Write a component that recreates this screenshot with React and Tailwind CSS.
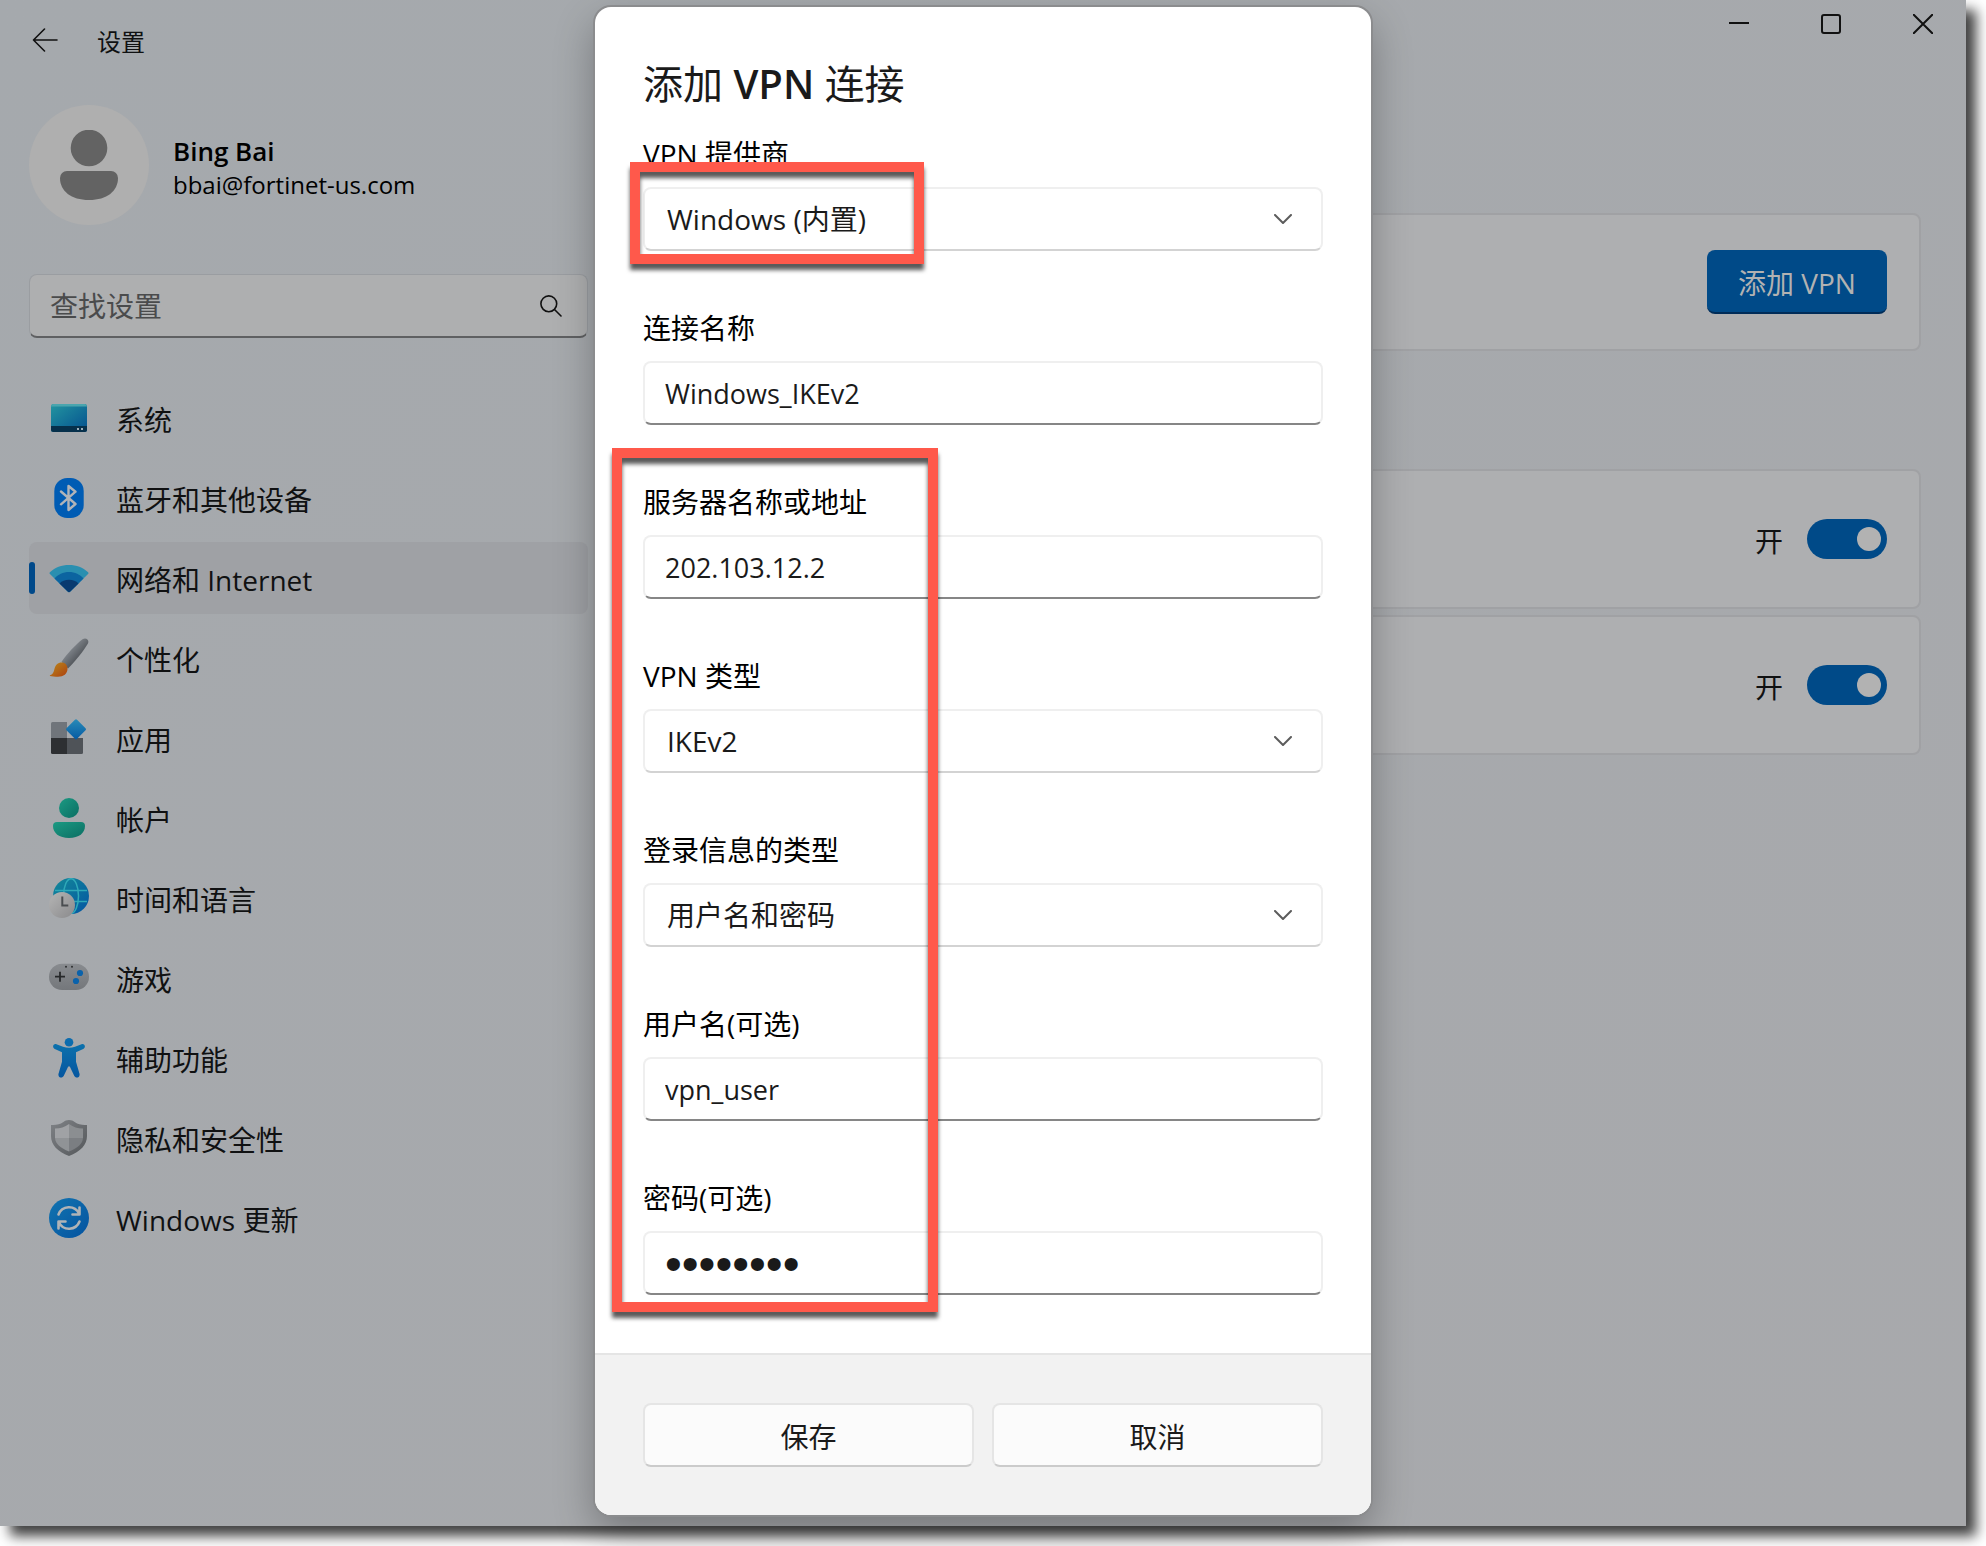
import { useState } from 'react'

function SystemIcon() {
  return (
    <svg viewBox="0 0 40 40" className="size-10" aria-hidden="true">
      <defs>
        <linearGradient id="sys" x1="0" y1="0" x2="1" y2="1">
          <stop offset="0" stopColor="#2395a0" />
          <stop offset="1" stopColor="#04508f" />
        </linearGradient>
      </defs>
      <rect x="2" y="6" width="36" height="28" rx="2.5" fill="url(#sys)" />
      <path d="M2 8.5A2.5 2.5 0 0 1 4.500 6h31A2.500 2.500 0 0 1 38 8.500z" fill="#4aa5ae" />
      <path d="M2 28h36v3.500a2.500 2.500 0 0 1-2.500 2.500h-31A2.500 2.500 0 0 1 2 31.500z" fill="#06304b" />
      <path d="M28 30h2v2h-2zM32 30h2v2h-2z" fill="#9fb0bb" />
    </svg>
  )
}

function BluetoothIcon() {
  return (
    <svg viewBox="0 0 40 40" className="size-10" aria-hidden="true">
      <rect x="5.300" y="0" width="29.400" height="40" rx="13" fill="#005cb4" />
      <path d="M12 13.500 26.500 26 19.500 32V8l7 5.700L12 26.300" fill="none" stroke="#b1b4b8" strokeWidth="2.400" strokeLinecap="round" strokeLinejoin="round" />
    </svg>
  )
}

function NetworkIcon() {
  return (
    <svg viewBox="0 0 40 40" className="size-10" aria-hidden="true">
      <path d="M1.200 16.300a1.500 1.500 0 0 1 0-2.300C6 9.500 12.500 7 20 7s14 2.500 18.800 7a1.500 1.500 0 0 1 0 2.300L21 33.800a1.500 1.500 0 0 1-2 0z" fill="#2a8fb0" />
      <path d="M5.500 20.500C9 16.500 14 14 20 14s11 2.500 14.500 6.500L21 33.800a1.500 1.500 0 0 1-2 0z" fill="#0c64a0" />
      <path d="M10.500 25.500C13 23 16 21.800 20 21.800s7 1.200 9.500 3.700L21 33.800a1.500 1.500 0 0 1-2 0z" fill="#083a70" />
    </svg>
  )
}

function BrushIcon() {
  return (
    <svg viewBox="0 0 40 40" className="size-10" aria-hidden="true">
      <defs>
        <linearGradient id="handle" x1="0.300" y1="0.300" x2="0.700" y2="0.700">
          <stop offset="0" stopColor="#858a90" />
          <stop offset="1" stopColor="#4b4f54" />
        </linearGradient>
        <linearGradient id="tip" x1="0" y1="0" x2="1" y2="1">
          <stop offset="0" stopColor="#b98a1c" />
          <stop offset="1" stopColor="#ad400f" />
        </linearGradient>
      </defs>
      <path d="M12.500 23.800C18 16 27 6 33.500 1.300c3.500-2.300 7.300.7 5.300 4.400C34.500 13 26 23.500 19 30.500z" fill="url(#handle)" />
      <path d="M.8 37.300c3-.8 3.600-2.500 4.500-5.800C6.200 27 9 24.500 12.500 24.500c3.800 0 6 2.500 6 6.300 0 5-4 8-9.500 8-3 0-6-.3-8-.8z" fill="url(#tip)" />
    </svg>
  )
}

function AppsIcon() {
  return (
    <svg viewBox="0 0 40 40" className="size-10" aria-hidden="true">
      <defs>
        <linearGradient id="apps" x1="0" y1="0" x2="1" y2="1">
          <stop offset="0" stopColor="#2a8cb8" />
          <stop offset="1" stopColor="#0459a3" />
        </linearGradient>
      </defs>
      <path d="M3.500 4H18v16H2V5.500A1.500 1.500 0 0 1 3.500 4z" fill="#70757b" />
      <path d="M2 20h16v16H3.500A1.500 1.500 0 0 1 2 34.500z" fill="#2d2f32" />
      <path d="M18 20h16v14.500a1.500 1.500 0 0 1-1.500 1.500H18z" fill="#4f5358" />
      <rect x="19.500" y="3.800" width="15" height="15" rx="1.500" transform="rotate(45 27 11.300)" fill="url(#apps)" />
    </svg>
  )
}

function AccountIcon() {
  return (
    <svg viewBox="0 0 40 40" className="size-10" aria-hidden="true">
      <defs>
        <linearGradient id="acct" x1="0" y1="0" x2="1" y2="1">
          <stop offset="0" stopColor="#1c9a83" />
          <stop offset="1" stopColor="#0b6e63" />
        </linearGradient>
      </defs>
      <circle cx="20" cy="10" r="10" fill="url(#acct)" />
      <path d="M8 24h24a4 4 0 0 1 4 4c0 7-6 12-16 12S4 35 4 28a4 4 0 0 1 4-4z" fill="url(#acct)" />
    </svg>
  )
}

function TimeIcon() {
  return (
    <svg viewBox="0 0 40 40" className="size-10" aria-hidden="true">
      <defs>
        <linearGradient id="globe" x1="0" y1="0" x2="1" y2="1">
          <stop offset="0" stopColor="#148a98" />
          <stop offset="1" stopColor="#0355a3" />
        </linearGradient>
        <linearGradient id="clock" x1="0" y1="0" x2="1" y2="1">
          <stop offset="0" stopColor="#b5b5b5" />
          <stop offset="1" stopColor="#8a8a8c" />
        </linearGradient>
      </defs>
      <circle cx="22" cy="18" r="18" fill="url(#globe)" />
      <g fill="none" stroke="#2fa9b8" strokeWidth="1.500">
        <ellipse cx="22" cy="18" rx="7.500" ry="17.300" />
        <path d="M6 12.500h32M6 23.500h32" />
      </g>
      <circle cx="13" cy="27" r="13" fill="url(#clock)" />
      <path d="M13.300 18.500v9h6" fill="none" stroke="#4a4d50" strokeWidth="2" />
    </svg>
  )
}

function GameIcon() {
  return (
    <svg viewBox="0 0 40 40" className="size-10" aria-hidden="true">
      <defs>
        <linearGradient id="pad" x1="0" y1="0" x2="0" y2="1">
          <stop offset="0" stopColor="#888b8f" />
          <stop offset="1" stopColor="#74777b" />
        </linearGradient>
      </defs>
      <rect x="0" y="5.700" width="40" height="26.300" rx="13" fill="url(#pad)" />
      <path d="M11 13.700v10M6 18.700h10" stroke="#26282a" strokeWidth="1.800" />
      <circle cx="31" cy="15" r="3.100" fill="#0a62ab" />
      <circle cx="27" cy="23" r="3.100" fill="#0a62ab" />
      <circle cx="17" cy="8.800" r="1" fill="#2d2f31" />
      <circle cx="23" cy="8.800" r="1" fill="#2d2f31" />
    </svg>
  )
}

function AccessIcon() {
  return (
    <svg viewBox="0 0 40 40" className="size-10" aria-hidden="true">
      <defs>
        <linearGradient id="access" x1="0" y1="0" x2="0" y2="1">
          <stop offset="0" stopColor="#0c71ac" />
          <stop offset="1" stopColor="#0556a0" />
        </linearGradient>
      </defs>
      <circle cx="20" cy="4.300" r="4.300" fill="#0c6cae" />
      <path d="M7.500 6.200 14 8.800c4 1.400 8 1.400 12 0l6.500-2.600c3.300-1 4.800 3.200 1.700 4.700L27 14.200v9.600l3.500 12c.8 3.600-3.700 5.300-5.300 2L20.800 28.500h-1.600L14.800 37.800c-1.600 3.300-6.100 1.600-5.300-2l3.500-12v-9.600L5.800 10.900c-3.100-1.500-1.600-5.700 1.700-4.700z" fill="url(#access)" />
    </svg>
  )
}

function ShieldIcon() {
  return (
    <svg viewBox="0 0 40 40" className="size-10" aria-hidden="true">
      <defs>
        <linearGradient id="shield" x1="0" y1="0" x2="1" y2="1">
          <stop offset="0" stopColor="#7f8286" />
          <stop offset="1" stopColor="#54575a" />
        </linearGradient>
      </defs>
      <path d="M20 2c2.500 0 4 .8 6 2.300C28.500 6 32 7 36 7h2v11c0 9-6.500 15.500-18 20C8.500 33.500 2 27 2 18V7h2c4 0 7.500-1 10-2.700C16 2.800 17.500 2 20 2z" fill="url(#shield)" />
      <path d="M20 6v14H6v-9.500c5.500 0 9.500-1.500 14-4.500z" fill="#a0a2a5" />
      <path d="M20 6c4.500 3 8.500 4.500 14 4.500V20H20z" fill="#8b8e91" />
      <path d="M6 20h14v13.500C11.500 30 6.500 26 6 20z" fill="#909396" />
      <path d="M34 20H20v13.500c8.500-3.500 13.500-7.500 14-13.500z" fill="#7b7e82" />
    </svg>
  )
}

function UpdateIcon() {
  return (
    <svg viewBox="0 0 40 40" className="size-10" aria-hidden="true">
      <defs>
        <linearGradient id="update" x1="0" y1="0" x2="1" y2="1">
          <stop offset="0" stopColor="#1274b0" />
          <stop offset="1" stopColor="#0453a0" />
        </linearGradient>
      </defs>
      <circle cx="20" cy="20" r="20" fill="url(#update)" />
      <g fill="none" stroke="#b0b3b6" strokeWidth="2.600" strokeLinecap="round" strokeLinejoin="round">
        <path d="M9.500 16.500A11.200 11.200 0 0 1 30 15.500M30.500 9.500v7h-7" />
        <path d="M30.500 23.500A11.200 11.200 0 0 1 10 24.500M9.500 30.500v-7h7" />
      </g>
    </svg>
  )
}

const NAV = [
  { label: '系统', icon: SystemIcon },
  { label: '蓝牙和其他设备', icon: BluetoothIcon },
  { label: '网络和 Internet', icon: NetworkIcon, active: true },
  { label: '个性化', icon: BrushIcon },
  { label: '应用', icon: AppsIcon },
  { label: '帐户', icon: AccountIcon },
  { label: '时间和语言', icon: TimeIcon },
  { label: '游戏', icon: GameIcon },
  { label: '辅助功能', icon: AccessIcon },
  { label: '隐私和安全性', icon: ShieldIcon },
  { label: 'Windows 更新', icon: UpdateIcon },
]

function TitleBar() {
  return (
    <header className="flex h-20 items-start justify-between">
      <div className="flex h-20 items-center gap-[39px] pl-8">
        <button type="button" aria-label="返回">
          <svg viewBox="0 0 26 24" className="h-6 w-[26px]" fill="none" stroke="#111" strokeWidth="1.600" strokeLinecap="round" strokeLinejoin="round">
            <path d="M25 12H1.500M12.500 1 1.500 12l11 11" />
          </svg>
        </button>
        <span className="pt-[3px] text-2xl">设置</span>
      </div>
      <div className="flex h-12 gap-[6px]">
        <button type="button" aria-label="最小化" className="flex w-[86px] items-center justify-center">
          <svg viewBox="0 0 20 20" className="size-5" stroke="#111" strokeWidth="2"><path d="M0 9h20" /></svg>
        </button>
        <button type="button" aria-label="最大化" className="flex w-[86px] items-center justify-center">
          <svg viewBox="0 0 20 20" className="size-5" fill="none" stroke="#111" strokeWidth="2"><rect x="1" y="1" width="18" height="18" rx="2" /></svg>
        </button>
        <button type="button" aria-label="关闭" className="flex w-[86px] items-center justify-center">
          <svg viewBox="0 0 20 20" className="size-5" stroke="#111" strokeWidth="2"><path d="m0 0 20 20M20 0 0 20" /></svg>
        </button>
      </div>
    </header>
  )
}

function Sidebar() {
  return (
    <aside className="w-[559px] shrink-0">
      <div className="flex items-center gap-6">
        <div className="flex size-[120px] items-center justify-center rounded-full bg-[#afafaf]">
          <svg viewBox="0 0 58 70" className="h-[70px] w-[58px]" fill="#636363" aria-hidden="true">
            <circle cx="29" cy="18" r="18.300" />
            <path d="M7 41h44a7 7 0 0 1 7 7c0 13-11 22-29 22S0 61 0 48a7 7 0 0 1 7-7z" />
          </svg>
        </div>
        <div className="pt-[3px] text-black">
          <p className="text-[26px] leading-9 font-semibold">Bing Bai</p>
          <p className="text-2xl">bbai@fortinet-us.com</p>
        </div>
      </div>

      <label className="mt-[49px] flex h-16 items-center rounded-lg border border-b-2 border-[#9a9da1] border-b-[#5f6062] bg-[#aeafb0] pr-[25px] pl-5">
        <input type="search" aria-label="查找设置" placeholder="查找设置" className="min-w-0 flex-1 bg-transparent text-[28px] outline-none placeholder:text-[#4a4b4c]" />
        <svg viewBox="0 0 22 22" className="size-[22px]" fill="none" stroke="#111" strokeWidth="1.600" strokeLinecap="round" aria-hidden="true">
          <circle cx="8.800" cy="8.800" r="7.900" />
          <path d="m14.500 14.500 6.500 6.500" />
        </svg>
      </label>

      <nav className="mt-11 flex flex-col gap-2">
        {NAV.map(({ label, icon: Icon, active }) => (
          <a
            key={label}
            href="#"
            aria-current={active ? 'page' : undefined}
            className={active
              ? 'flex h-[72px] items-center rounded-lg bg-[#9fa1a5] text-[28px]'
              : 'flex h-[72px] items-center rounded-lg text-[28px]'}
          >
            <span className={active ? 'h-8 w-[6px] rounded-full bg-[#00498a]' : 'h-8 w-[6px]'} />
            <span className="mr-[27px] ml-[14px]"><Icon /></span>
            <span className="pt-[3px]">{label}</span>
          </a>
        ))}
      </nav>
    </aside>
  )
}

function ToggleCard({ label }) {
  const [on, setOn] = useState(true)
  return (
    <label className="flex h-[140px] items-center justify-end gap-6 rounded-lg border-2 border-[#a0a1a4] bg-[#aeafb1] px-8">
      <span className="pt-[3px] text-[28px]">{on ? '开' : '关'}</span>
      <input
        type="checkbox"
        role="switch"
        aria-label={label}
        checked={on}
        onChange={e => setOn(e.target.checked)}
        className="peer sr-only"
      />
      <span className="flex h-10 w-20 items-center rounded-full bg-[#838487] px-[6px] peer-checked:justify-end peer-checked:bg-[#004a88]">
        <span className="size-6 rounded-full bg-[#b2b2b2]" />
      </span>
    </label>
  )
}

function Field({ id, label, children }) {
  return (
    <div className="relative">
      <label htmlFor={id} className="mb-[17px] block text-[28px] leading-8 text-black">{label}</label>
      {children}
    </div>
  )
}

function TextField({ id, label, value, type = 'text' }) {
  return (
    <Field id={id} label={label}>
      <input
        id={id}
        type={type}
        defaultValue={value}
        className={type === 'password'
          ? 'block h-16 w-full rounded-lg border-2 border-[#efefef] border-b-[#868686] bg-white px-5 font-["Liberation_Sans",sans-serif] text-5xl outline-none'
          : 'block h-16 w-full rounded-lg border-2 border-[#efefef] border-b-[#868686] bg-white px-5 text-[27px] outline-none'}
      />
    </Field>
  )
}

function SelectField({ id, label, value, children }) {
  return (
    <Field id={id} label={label}>
      <div className="grid items-center">
        <select
          id={id}
          defaultValue={value}
          className="col-start-1 row-start-1 h-16 w-full appearance-none rounded-lg border-2 border-[#efefef] border-b-[#d3d3d3] bg-white px-[22px] text-[28px] outline-none"
        >
          <option>{value}</option>
        </select>
        <svg viewBox="0 0 18 10" className="pointer-events-none col-start-1 row-start-1 mr-[31px] h-[10px] w-[18px] justify-self-end" fill="none" stroke="#5c5c5c" strokeWidth="2" strokeLinecap="round" strokeLinejoin="round" aria-hidden="true">
          <path d="m1 1 8 8 8-8" />
        </svg>
      </div>
      {children}
    </Field>
  )
}

function VpnDialog() {
  return (
    <section
      role="dialog"
      aria-labelledby="dialog-title"
      className="mt-[7px] mb-[11px] w-[776px] self-start justify-self-center overflow-hidden rounded-2xl bg-white text-[#1a1a1a] shadow-[0_0_0_2px_#8b8c8e,0_16px_40px_rgba(0,0,0,0.3)] [grid-area:1/1]"
    >
      <form>
        <div className="px-12 pt-[53px] pb-[58px]">
          <h1 id="dialog-title" className="mb-[30px] text-[40px] leading-[48px]">
            添加 <span className="font-semibold">VPN</span> 连接
          </h1>
          <div className="flex flex-col gap-[61px]">
            <SelectField id="provider" label="VPN 提供商" value="Windows (内置)">
              <div className="pointer-events-none absolute top-[24px] -bottom-[13px] -left-[13px] w-[294px] border-10 border-[#ff594b] drop-shadow-[0_6px_2px_rgba(0,0,0,0.65)]" />
            </SelectField>
            <TextField id="conn-name" label="连接名称" value="Windows_IKEv2" />
            <div className="relative flex flex-col gap-[61px]">
              <TextField id="server" label="服务器名称或地址" value="202.103.12.2" />
              <SelectField id="vpn-type" label="VPN 类型" value="IKEv2" />
              <SelectField id="sign-in" label="登录信息的类型" value="用户名和密码" />
              <TextField id="username" label="用户名(可选)" value="vpn_user" />
              <TextField id="password" label="密码(可选)" value="password" type="password" />
              <div className="pointer-events-none absolute -top-[38px] -bottom-[17px] -left-[31px] w-[326px] border-10 border-[#ff594b] drop-shadow-[0_6px_2px_rgba(0,0,0,0.65)]" />
            </div>
          </div>
        </div>
        <div className="grid grid-cols-2 gap-[18px] border-t-2 border-[#e5e5e5] bg-[#f2f2f2] px-12 pt-12 pb-12 text-[28px]">
          <button type="button" className="h-16 rounded-lg border-2 border-[#e5e5e5] border-b-[#cbcbcb] bg-[#fbfbfb] pt-[3px]">保存</button>
          <button type="button" className="h-16 rounded-lg border-2 border-[#e5e5e5] border-b-[#cbcbcb] bg-[#fbfbfb] pt-[3px]">取消</button>
        </div>
      </form>
    </section>
  )
}

export default function App() {
  return (
    <div className="overflow-hidden bg-white pr-5 pb-5 font-['Open_Sans','Noto_Sans_CJK_SC',sans-serif]">
      <div className="grid grid-cols-1 bg-linear-to-br from-[#a5a9ad] to-[#a8a9ac] text-[#101112] shadow-[10px_10px_12px_rgba(0,0,0,0.75)]">
        <div className="[grid-area:1/1]">
          <TitleBar />
          <div className="flex gap-[52px] pt-[25px] pr-[45px] pl-[29px]">
            <Sidebar />
            <main className="flex-1 pt-[108px]">
              <div className="flex h-[138px] items-center justify-end rounded-lg border-2 border-[#a0a1a4] bg-[#aeafb1] px-8">
                <button type="button" className="h-16 w-[180px] rounded-lg border-b-2 border-[#002c58] bg-[#004a88] pt-[3px] text-[28px] text-[#b2b2b2]">添加 VPN</button>
              </div>
              <div className="mt-[118px] flex flex-col gap-[6px]">
                <ToggleCard label="允许通过按流量计费的网络使用 VPN" />
                <ToggleCard label="漫游时允许使用 VPN" />
              </div>
            </main>
          </div>
        </div>
        <VpnDialog />
      </div>
    </div>
  )
}
